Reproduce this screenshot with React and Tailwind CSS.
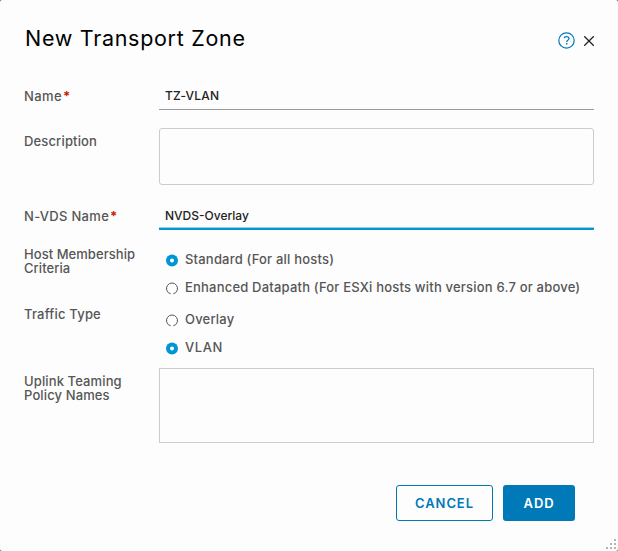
import React, { useState } from 'react';

const Label = ({ children, required, className }) => (
  <div className={`w-[135px] shrink-0 ${className}`}>
    {children}
    {required && <span className="ml-[1px] font-bold text-[#c92100]">*</span>}
  </div>
);

const Radio = ({ label, name, checked, onChange, className }) => (
  <label className="flex h-[28px] items-center pl-[7px]">
    <input type="radio" name={name} checked={checked} onChange={onChange} className="sr-only" />
    <svg width="12" height="13" viewBox="0 0 12 13" className="mr-[7px] shrink-0">
      {checked ? (
        <>
          <circle cx="6" cy="6.5" r="6" fill="#0095d3" />
          <circle cx="6" cy="6.5" r="2" fill="#fff" />
        </>
      ) : (
        <path d="M4.700 11.840A5.500 5.500 0 1 1 7.300 11.840" fill="none" stroke="#565656" />
      )}
    </svg>
    <span className={`-mt-[2px] whitespace-nowrap ${className}`}>{label}</span>
  </label>
);

const App = () => {
  const [form, setForm] = useState({
    name: 'TZ-VLAN',
    nvds: 'NVDS-Overlay',
    host: 'standard',
    traffic: 'vlan',
  });

  const update = (key, value) => setForm({ ...form, [key]: value });

  return (
    <div className="h-[551px] w-[618px] overflow-hidden bg-[#555]">
      <div className="relative h-[551px] rounded-[2px] bg-[#fdfdfd] px-[24px] font-['Inter',sans-serif] text-[13px] leading-[14px] font-medium text-[#565656]">
        <header className="flex h-[80px] items-start justify-between">
          <h1 className="mt-[25px] ml-[1px] text-[21.5px] leading-[26px] font-normal tracking-[0.7px] text-black">
            New Transport Zone
          </h1>
          <div className="mt-[32px] flex items-center gap-[9px]">
            <svg width="17" height="17" viewBox="0 0 17 17" fill="none" stroke="#0079b8">
              <circle cx="8.5" cy="8.5" r="7.7" strokeWidth="1.2" />
              <path d="M6 6.2C6.3 5.2 7.2 4.6 8.5 4.6c1.5 0 2.5.8 2.5 2 0 1.7-2.3 1.7-2.3 3.4" strokeWidth="1.2" />
              <path d="M8 11.7h1.4" strokeWidth="1.4" />
            </svg>
            <svg width="10" height="10" viewBox="0 0 10 10" fill="none" stroke="#222" strokeWidth="1.3">
              <path d="M.2.2l9.6 9.6M9.8.2L.2 9.8" />
            </svg>
          </div>
        </header>

        <div className="flex h-[30px]">
          <Label required className="pt-[9px] tracking-[0.4px]">Name</Label>
          <input
            value={form.name}
            onChange={(e) => update('name', e.target.value)}
            className="h-[30px] w-[435px] border-b border-[#9a9a9a] pt-[2px] pl-[6px] text-[12px] tracking-[0.2px] text-[#222] outline-none"
          />
        </div>

        <div className="mt-[18px] flex h-[57px]">
          <Label className="pt-[6px] tracking-[0.15px]">Description</Label>
          <textarea className="h-[57px] w-[435px] resize-none rounded-[3px] border border-[#ccc] outline-none" />
        </div>

        <div className="mt-[15px] flex h-[30px]">
          <Label required className="pt-[9px] tracking-[0.3px]">N-VDS Name</Label>
          <input
            value={form.nvds}
            onChange={(e) => update('nvds', e.target.value)}
            className="h-[30px] w-[435px] border-b-[2px] border-[#0095d3] pt-[3px] pl-[6px] text-[12px] text-[#222] shadow-[inset_0_-1px_0_#9ad0ea] outline-none"
          />
        </div>

        <div className="mt-[16px] flex h-[60px]">
          <Label className="pt-[1px] tracking-[0.05px]">
            Host Membership
            <br />
            Criteria
          </Label>
          <div>
            <Radio name="host" label="Standard (For all hosts)" checked={form.host === 'standard'} onChange={() => update('host', 'standard')} className="tracking-[0.2px]" />
            <Radio name="host" label="Enhanced Datapath (For ESXi hosts with version 6.7 or above)" checked={form.host === 'enhanced'} onChange={() => update('host', 'enhanced')} className="tracking-[0.2px]" />
          </div>
        </div>

        <div className="flex h-[62px]">
          <Label className="pt-[1px] tracking-[0.2px]">Traffic Type</Label>
          <div>
            <Radio name="traffic" label="Overlay" checked={form.traffic === 'overlay'} onChange={() => update('traffic', 'overlay')} className="tracking-[0.2px]" />
            <Radio name="traffic" label="VLAN" checked={form.traffic === 'vlan'} onChange={() => update('traffic', 'vlan')} className="tracking-[0.6px]" />
          </div>
        </div>

        <div className="flex h-[75px]">
          <Label className="pt-[6px] tracking-[0.12px]">
            Uplink Teaming
            <br />
            Policy Names
          </Label>
          <textarea className="h-[75px] w-[435px] resize-none border border-[#ccc] outline-none" />
        </div>

        <footer className="mt-[42px] flex justify-end gap-[10px] pr-[19px] font-semibold tracking-[0.9px]">
          <button className="h-[36px] w-[97px] rounded-[3px] border border-[#0079b8] pb-[1px] text-[#0079b8]">CANCEL</button>
          <button className="h-[36px] w-[72px] rounded-[3px] bg-[#0079b8] pb-[1px] text-white">ADD</button>
        </footer>

        {/* resize grip */}
        <svg width="12" height="12" viewBox="0 0 12 12" fill="#b5b5b5" className="absolute right-0 bottom-0">
          <path d="M8 0h2v2H8zM4 4h2v2H4zM8 4h2v2H8zM0 8h2v2H0zM4 8h2v2H4zM8 8h2v2H8z" />
        </svg>
      </div>
    </div>
  );
};

export default App;
